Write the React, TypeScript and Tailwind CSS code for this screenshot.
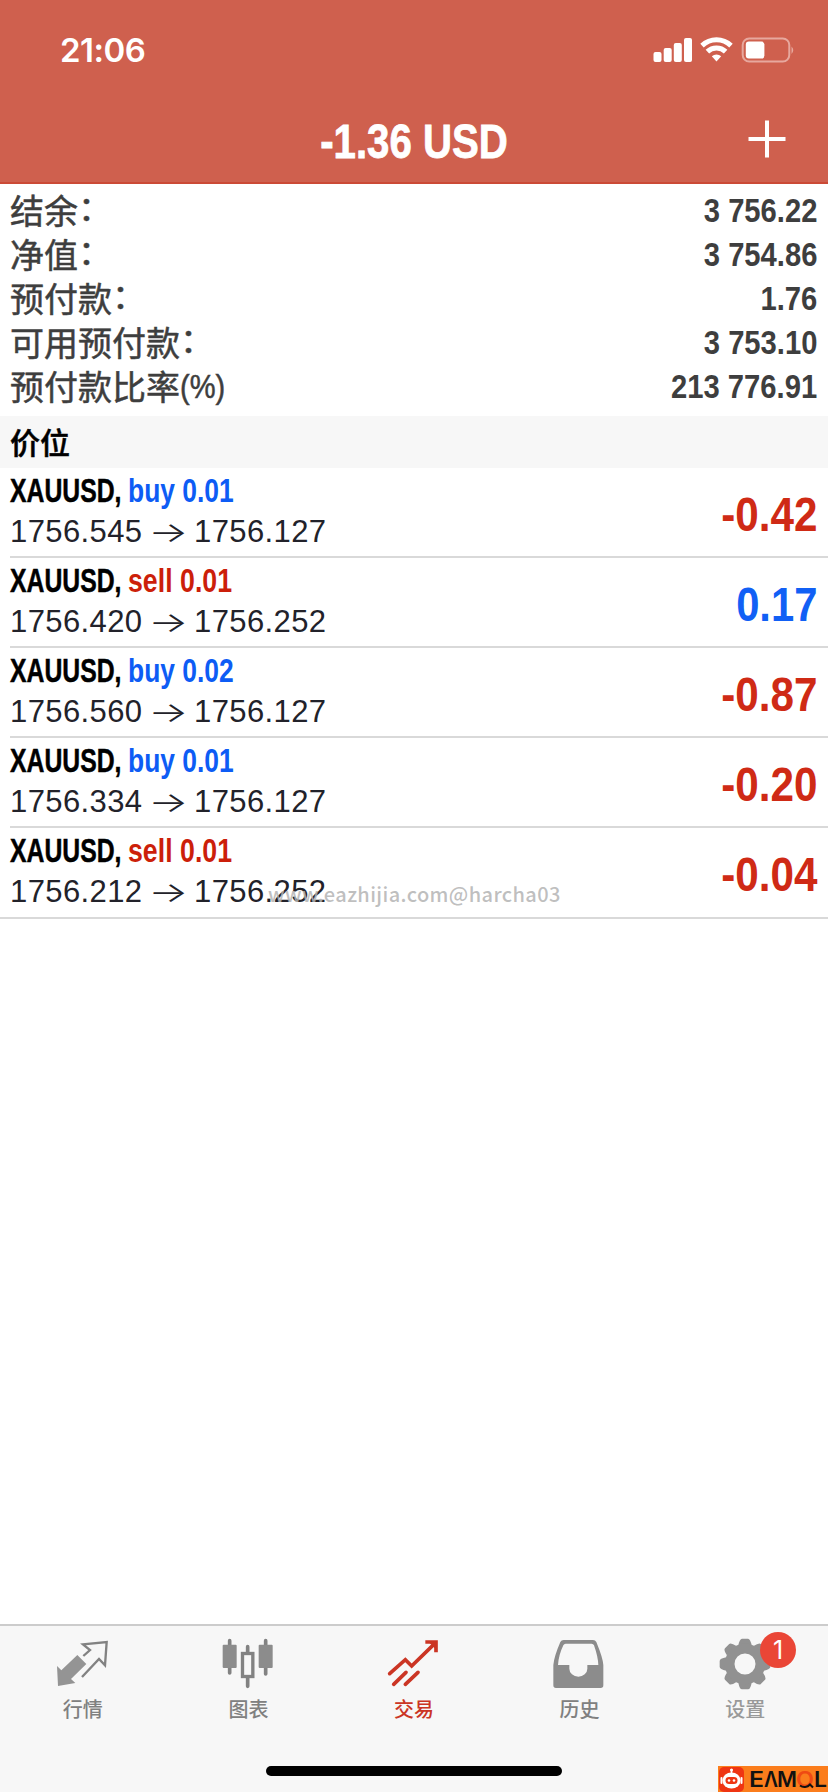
import type { ReactNode } from "react";

const summary = [
  { label: "结余", suffix: "：", value: "3 756.22" },
  { label: "净值", suffix: "：", value: "3 754.86" },
  { label: "预付款", suffix: "：", value: "1.76" },
  { label: "可用预付款", suffix: "：", value: "3 753.10" },
  { label: "预付款比率", suffix: "(%)", value: "213 776.91" },
];

type Position = { side: "buy" | "sell"; volume: string; open: string; current: string; profit: string };

const positions: Position[] = [
  { side: "buy", volume: "0.01", open: "1756.545", current: "1756.127", profit: "-0.42" },
  { side: "sell", volume: "0.01", open: "1756.420", current: "1756.252", profit: "0.17" },
  { side: "buy", volume: "0.02", open: "1756.560", current: "1756.127", profit: "-0.87" },
  { side: "buy", volume: "0.01", open: "1756.334", current: "1756.127", profit: "-0.20" },
  { side: "sell", volume: "0.01", open: "1756.212", current: "1756.252", profit: "-0.04" },
];

function StatusBar() {
  return (
    <div className="flex h-[100px] items-center justify-between pl-[60px] pr-[33px]">
      <span className="font-['Inter',sans-serif] text-[33px] leading-none font-semibold tracking-[-0.5px]">21:06</span>
      <svg className="h-[26px] w-[142px]" viewBox="0 0 142 26" fill="white">
        <rect x="0.5" y="15" width="8" height="10" rx="2" />
        <rect x="10.7" y="11" width="8" height="14" rx="2" />
        <rect x="20.8" y="6" width="8" height="19" rx="2" />
        <rect x="31" y="1" width="8" height="24" rx="2" />
        <g fill="none" stroke="white" strokeWidth="5">
          <path d="M49 8.6 A21 21 0 0 1 78 8.6" />
          <path d="M54.4 14.6 A13 13 0 0 1 72.6 14.6" />
        </g>
        <path d="M58.8 19.2 A7 7 0 0 1 68.2 19.2 L63.5 24.4Z" />
        <rect x="89.7" y="1.5" width="46.6" height="23" rx="6.5" fill="none" stroke="#e7a89e" strokeWidth="2" />
        <rect x="92.8" y="4.6" width="18.6" height="17" rx="3" />
        <path d="M138.5 9.5 Q142 13 138.5 17Z" fill="#e7a89e" />
      </svg>
    </div>
  );
}

function Header() {
  return (
    <header className="h-[184px] border-b-2 border-[#cb4a36] bg-[#cf604e] text-white">
      <StatusBar />
      <div className="grid h-[82px] grid-cols-[120px_1fr_120px] items-center">
        <span />
        <h1 className="origin-center scale-x-[0.82] text-center text-[49px] leading-[82px] font-bold whitespace-nowrap [-webkit-text-stroke:0.8px_white]">
          -1.36 USD
        </h1>
        <svg className="mb-[4px] ml-[40px] h-[38px] w-[38px]" viewBox="0 0 38 38" stroke="white" strokeWidth="4">
          <path d="M19 0.5V37.5M0.5 19H37.5" />
        </svg>
      </div>
    </header>
  );
}

function Summary() {
  return (
    <section className="h-[232px] pt-[4px] pr-[11px] pl-[10px] text-[#3e3e3e]">
      {summary.map((row) => (
        <div key={row.label} className="flex h-[44px] items-center justify-between">
          <span className="flex font-['Noto_Sans_CJK_SC',sans-serif] text-[34px] leading-[42px] [-webkit-text-stroke:0.5px_#3e3e3e]">
            <span>{row.label}</span>
            <span
              className={
                row.suffix === "(%)"
                  ? "origin-left translate-y-px scale-x-[0.88] font-['Liberation_Sans',sans-serif] text-[33px]"
                  : "-translate-y-[3px]"
              }
            >
              {row.suffix}
            </span>
          </span>
          <span className="origin-right translate-y-px scale-x-[0.885] text-[33px] leading-[42px] font-bold">
            {row.value}
          </span>
        </div>
      ))}
    </section>
  );
}

function PositionRow({ position, last }: { position: Position; last: boolean }) {
  const { side, volume, open, current, profit } = position;
  return (
    <li className={last ? "h-[91px] border-b-2 border-[#d9d9d9] pl-[10px]" : "h-[90px] pl-[10px]"}>
      <div
        className={
          last
            ? "flex h-[88px] items-center justify-between pr-[11px]"
            : "flex h-[90px] items-center justify-between border-b-2 border-[#d9d9d9] pr-[11px]"
        }
      >
        <div className="flex flex-col">
          <div className="flex text-[33px] leading-[40px] font-bold whitespace-nowrap">
            <span className="w-[118px] origin-left scale-x-[0.75] text-black [-webkit-text-stroke:0.5px_black]">XAUUSD,</span>
            <span className={side === "buy" ? "origin-left scale-x-[0.8] text-[#0d5cf5]" : "origin-left scale-x-[0.81] text-[#cc1f0a]"}>
              {side} {volume}
            </span>
          </div>
          <div className="flex items-center text-[31px] leading-[42px] tracking-[0.4px] text-[#22222a]">
            <span className="w-[133px]">{open}</span>
            <span className="flex w-[51px] scale-x-[1.5] justify-center font-['Inter',sans-serif] text-[28px] font-light">→</span>
            <span>{current}</span>
          </div>
        </div>
        <span
          className={
            profit.startsWith("-")
              ? "origin-right translate-y-[3px] scale-x-[0.88] text-[48px] leading-none font-bold text-[#cf2a15]"
              : "origin-right translate-y-[3px] scale-x-[0.87] text-[48px] leading-none font-bold text-[#1160f5]"
          }
        >
          {profit}
        </span>
      </div>
    </li>
  );
}

function QuotesIcon() {
  return (
    <svg className="h-[56px] w-[56px]" viewBox="164 84 168 168">
      <path d="M231 135 L258 162 L212 207 L225 219 L173 228 L170 168 L183 181Z" fill="#949494" />
      <path
        d="M249 138 L269 120 L248 103 L319 96 L314 166 L296 147 L245 201"
        fill="none"
        stroke="#828282"
        strokeWidth="7"
      />
    </svg>
  );
}

function ChartIcon() {
  return (
    <svg className="h-[56px] w-[56px]" viewBox="661 84 168 168" fill="#8c8c8c">
      <g stroke="#828282" strokeWidth="11" strokeLinecap="round">
        <path d="M690 92V189M798 92V192M744 110V128M744 204V229" />
      </g>
      <rect x="669" y="104" width="42" height="70" rx="3" />
      <rect x="777" y="104" width="42" height="70" rx="3" />
      <rect x="728.5" y="130.5" width="31" height="69" fill="none" stroke="#828282" strokeWidth="10" />
    </svg>
  );
}

function TradeIcon() {
  return (
    <svg className="h-[56px] w-[56px]" viewBox="258 84 168 168" fill="none" stroke="#cb3524" strokeWidth="11">
      <path d="M269 191 L316 149 L335 168 L404 101" strokeLinecap="round" />
      <path d="M376 96 H408 V127" />
      <path d="M388 98 L406 98 L406 116Z" fill="#cb3524" stroke="none" />
      <path d="M281 223 L318 187 M316 223 L354 187" strokeLinecap="round" />
    </svg>
  );
}

function HistoryIcon() {
  return (
    <svg className="h-[56px] w-[56px]" viewBox="755 84 168 168">
      <path
        fillRule="evenodd"
        fill="#8c8c8c"
        d="M790 90 H878 Q885 90 888 96 Q908 145 909 165 V226 Q909 234 901 234 H767 Q759 234 759 226 V165 Q761 140 780 96 Q783 90 790 90Z M796 101 Q791 101 789 106 Q775 135 773 165 H807 V176 A27 24 0 0 0 861 176 V165 H894 Q893 140 881 106 Q879 101 874 101Z"
      />
    </svg>
  );
}

const gearTooth = "M412 106 Q416 86 423 86 H441 Q448 86 452 106Z";

function SettingsIcon() {
  return (
    <div className="relative h-[56px] w-[56px]">
      <svg className="h-[56px] w-[56px]" viewBox="348 84 168 168">
        <g fill="#919191">
          {[0, 45, 90, 135, 180, 225, 270, 315].map((angle) => (
            <path key={angle} d={gearTooth} transform={`rotate(${angle} 432 162)`} />
          ))}
        </g>
        <circle cx="432" cy="162" r="46" fill="none" stroke="#919191" strokeWidth="29" />
      </svg>
      <span className="absolute top-[-6px] left-[43px] flex h-[36px] w-[36px] items-center justify-center rounded-full bg-[#ea4636] font-['Inter',sans-serif] text-[25px] leading-none text-white">
        1
      </span>
    </div>
  );
}

function Tab({ label, icon, tone }: { label: string; icon: ReactNode; tone: string }) {
  return (
    <div className={`flex flex-1 flex-col items-center pt-[12px] ${tone}`}>
      {icon}
      <span className="font-['Noto_Sans_CJK_SC',sans-serif] text-[20px] leading-[30px] font-medium">{label}</span>
    </div>
  );
}

function BrandBadge() {
  return (
    <div className="absolute right-0 bottom-0 flex h-[26px] w-[110px] items-center overflow-hidden bg-[#fb7d1c]">
      <svg className="h-[26px] w-[110px]" viewBox="0 0 110 26">
        <rect x="1" y="1" width="25" height="25" rx="5" fill="#ef3513" />
        <path d="M13.5 3V8" stroke="white" strokeWidth="1.6" />
        <circle cx="13.5" cy="4" r="1.5" fill="white" />
        <ellipse cx="13.5" cy="14.5" rx="9" ry="8" fill="white" />
        <path d="M3.5 12V17M23.5 12V17" stroke="white" strokeWidth="2" strokeLinecap="round" />
        <rect x="7.5" y="11" width="12" height="7" rx="3.5" fill="#ef3513" />
        <circle cx="11" cy="14.5" r="1.3" fill="white" />
        <circle cx="16" cy="14.5" r="1.3" fill="white" />
        <g fontFamily="Inter, sans-serif" fontSize="21" fontWeight="600" fill="#111">
          <text x="31" y="21" textLength="15" lengthAdjust="spacingAndGlyphs">E</text>
          <text x="46" y="21" textLength="14" lengthAdjust="spacingAndGlyphs">Λ</text>
          <text x="59" y="21" textLength="20" lengthAdjust="spacingAndGlyphs">M</text>
          <text x="78" y="21" textLength="18" lengthAdjust="spacingAndGlyphs" fill="#ef4a13">O</text>
          <text x="96" y="21" textLength="13" lengthAdjust="spacingAndGlyphs">L</text>
        </g>
        <path d="M82 19.5A7.500 7.500 0 0 0 92 18.5L95 21.5" fill="none" stroke="#111" strokeWidth="2" />
      </svg>
    </div>
  );
}

export default function App() {
  return (
    <div className="relative flex h-[1792px] w-[828px] flex-col overflow-hidden bg-white font-['Liberation_Sans',Arial,sans-serif]">
      <Header />
      <Summary />
      <h2 className="h-[52px] bg-[#f7f7f7] pl-[10px] font-['Noto_Sans_CJK_SC',sans-serif] text-[30px] leading-[50px] font-medium text-black [-webkit-text-stroke:0.5px_black]">
        价位
      </h2>
      <ul className="flex-1">
        {positions.map((position, index) => (
          <PositionRow key={position.open} position={position} last={index === positions.length - 1} />
        ))}
      </ul>
      <footer className="flex h-[168px] flex-col items-center border-t-2 border-[#cccccc] bg-[#f7f7f7]">
        <nav className="flex h-[140px] w-full">
          <Tab label="行情" icon={<QuotesIcon />} tone="text-[#808080]" />
          <Tab label="图表" icon={<ChartIcon />} tone="text-[#808080]" />
          <Tab label="交易" icon={<TradeIcon />} tone="text-[#cb3524]" />
          <Tab label="历史" icon={<HistoryIcon />} tone="text-[#808080]" />
          <Tab label="设置" icon={<SettingsIcon />} tone="text-[#999999]" />
        </nav>
        <div className="h-[10px] w-[296px] rounded-full bg-black" />
      </footer>
      <span className="absolute top-[881px] left-[268px] font-['Noto_Sans_CJK_SC',sans-serif] text-[20px] leading-[26px] font-medium tracking-[0.4px] text-[#b4b4b4]/85">
        www.eazhijia.com@harcha03
      </span>
      <BrandBadge />
    </div>
  );
}
